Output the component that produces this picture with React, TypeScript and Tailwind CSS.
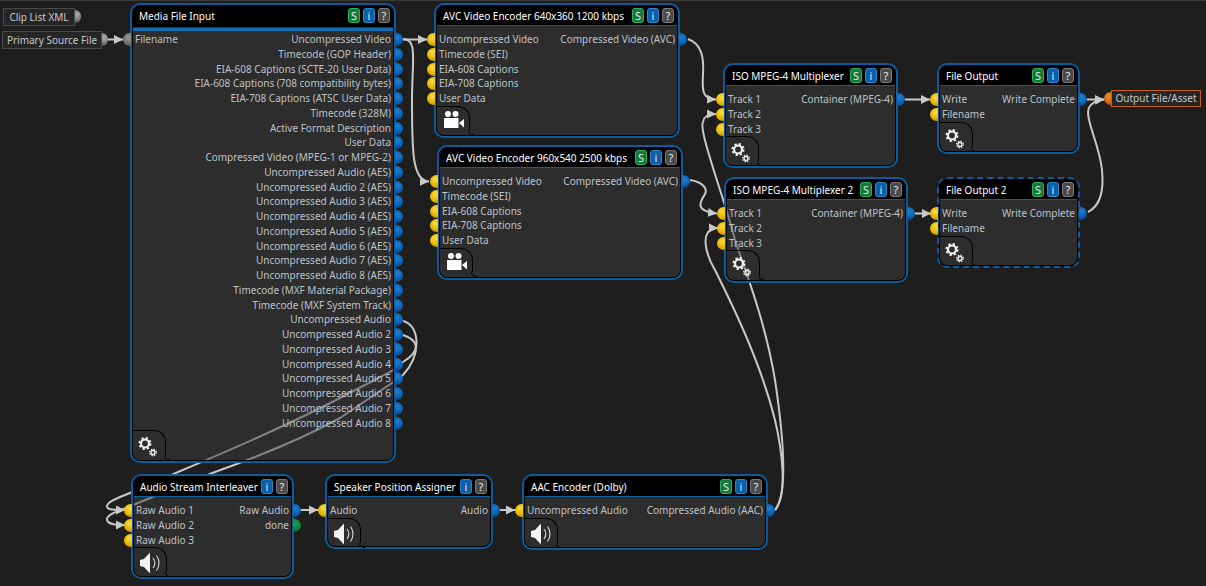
import type { ReactNode } from "react"

type PortKind = "in" | "out" | "done"

const portStyles: Record<string, string> = {
  in: "-left-[12px] rounded-l-full bg-[radial-gradient(circle_at_70%_35%,#ffdc3c,#e2b300_60%,#9a7400)]",
  out: "-right-[12px] rounded-r-full bg-[radial-gradient(circle_at_30%_35%,#1f7fd0,#0a5cab_60%,#07386b)]",
  done: "-right-[12px] rounded-r-full bg-[radial-gradient(circle_at_30%_35%,#1a9e4c,#0c7d38_60%,#064a20)]",
  grayIn: "-left-[12px] rounded-l-full bg-[radial-gradient(circle_at_70%_35%,#999999,#666666_70%,#3c3c3c)]",
}

function Port({ kind }: { kind: string }) {
  return <span className={`absolute top-px w-[8px] h-[13px] ${portStyles[kind]}`} />
}

function Row({ label, kind, right }: { label: string; kind: PortKind | "grayIn"; right?: boolean }) {
  return (
    <div className={`relative h-[14.75px] leading-[14.75px] whitespace-nowrap ${right ? "text-right" : "text-left"}`}>
      {label}
      <Port kind={kind} />
    </div>
  )
}

function Badge({ children, className }: { children: ReactNode; className: string }) {
  return (
    <span className={`w-[12px] h-[15px] rounded-[3px] border flex items-center justify-center text-[11px] leading-none text-[#e8e8e8] ${className}`}>
      {children}
    </span>
  )
}

function Gears() {
  return (
    <svg width="24" height="24" viewBox="0 0 24 24" fill="none" stroke="#f4f4f4">
      <circle cx="8" cy="9.5" r="4" strokeWidth="2.2" />
      <circle cx="8" cy="9.5" r="5.6" strokeWidth="1.8" strokeDasharray="2.2 2.2" />
      <circle cx="16" cy="18.5" r="2" strokeWidth="1.3" />
      <circle cx="16" cy="18.5" r="3.3" strokeWidth="1.3" strokeDasharray="1.4 1.2" />
    </svg>
  )
}

function Camera() {
  return (
    <svg width="22" height="20" viewBox="0 0 22 20" fill="#ffffff">
      <circle cx="6" cy="4" r="3" />
      <circle cx="13.5" cy="4" r="3" />
      <rect x="2" y="8" width="14.5" height="10" rx="0.5" />
      <polygon points="17,13 22,9 22,17.5" />
    </svg>
  )
}

function Speaker() {
  return (
    <svg width="24" height="24" viewBox="-1 0 24 24" fill="none">
      <polygon points="1,9 5,8 11,1.5 11,22.5 5,16 1,15" fill="#f4f4f4" />
      <path d="M14 7 C16.2 10 16.2 14 14 17" stroke="#cfcfcf" strokeWidth="1.2" />
      <path d="M17.5 4.5 C20.8 9 20.8 15 17.5 19.5" stroke="#cfcfcf" strokeWidth="1.2" />
    </svg>
  )
}

type NodeProps = {
  title: string
  box: string
  inputs: string[]
  outputs: string[]
  icon: ReactNode
  badges?: string
  strip?: boolean
  dashed?: boolean
  doneLast?: boolean
}

function FlowNode({ title, box, inputs, outputs, icon, badges = "Si?", strip, dashed, doneLast }: NodeProps) {
  return (
    <div className={`absolute ${box} rounded-[10px] border-2 border-[#0b5b9e] ${dashed ? "border-dashed" : ""}`}>
      <div className="h-full rounded-[8px] border border-black bg-[#3c3c3c]/50 flex flex-col">
        <div className={`bg-black rounded-t-[7px] pl-[6px] pr-[3px] flex items-center justify-between text-[10px] text-white ${strip ? "h-[21px] pb-[2px]" : "h-[19px]"}`}>
          <span className="whitespace-nowrap pt-[2px]">{title}</span>
          <div className="flex gap-[3px]">
            {badges.includes("S") && <Badge className="bg-[#14793a] border-[#2fae5e]">S</Badge>}
            <Badge className="bg-[#0b5ea8] border-[#2b86cc]">i</Badge>
            <Badge className="bg-[#4a4a4a] border-[#7a7a7a]">?</Badge>
          </div>
        </div>
        {strip ? <div className="h-[4px] bg-[#0f6fae] border-t border-[#0a3f6c]" /> : <div className="h-px bg-[#0e5f9f]" />}
        <div className={`flex-1 flex flex-col justify-between min-h-0 ${strip ? "pt-px" : "pt-[6px]"}`}>
          <div className="flex justify-between px-[2px] text-[10px] text-[#bcc2c8]">
            <div className="flex flex-col">
              {inputs.map((l) => (
                <Row key={l} label={l} kind={strip ? "grayIn" : "in"} />
              ))}
            </div>
            <div className="flex flex-col">
              {outputs.map((l, i) => (
                <Row key={l} label={l} right kind={doneLast && i === outputs.length - 1 ? "done" : "out"} />
              ))}
            </div>
          </div>
          {/* icon tab, the right edge flares out into the bottom of the node */}
          <div className="relative w-[33px] h-[25px] mb-[5px] pt-[3px] rounded-tr-[12px] border-t border-r border-black flex items-start justify-center">
            {icon}
            <span className="absolute left-full -ml-px top-full w-[6px] h-[5px] border-l border-b border-black rounded-bl-[6px]" />
          </div>
        </div>
      </div>
    </div>
  )
}

const mediaOutputs = [
  "Uncompressed Video",
  "Timecode (GOP Header)",
  "EIA-608 Captions (SCTE-20 User Data)",
  "EIA-608 Captions (708 compatibility bytes)",
  "EIA-708 Captions (ATSC User Data)",
  "Timecode (328M)",
  "Active Format Description",
  "User Data",
  "Compressed Video (MPEG-1 or MPEG-2)",
  "Uncompressed Audio (AES)",
  "Uncompressed Audio 2 (AES)",
  "Uncompressed Audio 3 (AES)",
  "Uncompressed Audio 4 (AES)",
  "Uncompressed Audio 5 (AES)",
  "Uncompressed Audio 6 (AES)",
  "Uncompressed Audio 7 (AES)",
  "Uncompressed Audio 8 (AES)",
  "Timecode (MXF Material Package)",
  "Timecode (MXF System Track)",
  "Uncompressed Audio",
  "Uncompressed Audio 2",
  "Uncompressed Audio 3",
  "Uncompressed Audio 4",
  "Uncompressed Audio 5",
  "Uncompressed Audio 6",
  "Uncompressed Audio 7",
  "Uncompressed Audio 8",
]

const encoderInputs = ["Uncompressed Video", "Timecode (SEI)", "EIA-608 Captions", "EIA-708 Captions", "User Data"]
const tracks = ["Track 1", "Track 2", "Track 3"]

// wires sit under the nodes, the see-through node bodies dim them
const wires = [
  "M108 39.5 L123 39.5",
  "M403 39.5 L427 39.5",
  "M403 39 C418 39 412 60 412 100 C412 150 412 181 429 181.5",
  "M688 39 C702 44 704 58 703 74 C702 90 702 99 716 99.5",
  "M690 180 C702 182 708 188 705 194 C700 202 694 211 717 213.5",
  "M905 99.5 L930 99.5",
  "M914 213.5 L931 213.5",
  "M1087 99.5 L1104 99.5",
  "M1088 212 C1100 206 1104 190 1102 170 C1099 140 1080 112 1092 104 C1095 101 1098 100 1104 99.5",
  "M775 510 C788 495 782 450 775 420 C760 360 730 300 715 270 C706 255 698 228 718 228",
  "M775 510 C788 495 784 440 775 380 C765 320 745 270 735 240 C725 200 698 130 703 122 C704 116 708 114 716 114",
  "M403 321 C420 325 422 355 403 375 C398 379 395 381 392 383 L340 418 C300 440 260 456 215 472 C190 482 160 494 133 505 C122 510 106 514 107 520 C108 524 114 525 125 525",
  "M403 335 C418 340 422 350 403 362 C398 366 395 369 392 371 L340 398 C290 424 240 446 178 472 C160 480 145 487 130 493 C118 498 106 502 107 507 C108 510 114 510 125 510",
  "M500 510 L515 510",
  "M301 510 L318 510",
]

export default function App() {
  return (
    <div className="relative w-[1206px] h-[586px] overflow-hidden bg-[#1e1e1e] shadow-[inset_0_1px_0_#3a3a3a] font-['Noto_Sans',sans-serif]">
      <svg className="absolute inset-0" width="1206" height="586" fill="none">
        <defs>
          <marker id="arrow" markerUnits="userSpaceOnUse" markerWidth="10" markerHeight="10" refX="9" refY="5" orient="auto">
            <polygon points="0,0.5 9,5 0,9.5" fill="#c8c8c8" />
          </marker>
        </defs>
        {wires.map((d) => (
          <path key={d} d={d} stroke="#c8c8c8" strokeWidth="2" markerEnd="url(#arrow)" />
        ))}
      </svg>

      <div className="absolute left-[3px] top-[8px] w-[72px] h-[18px] bg-[#262626] border border-[#4a4a4a] text-[10px] leading-[16px] text-[#c4c8cc] text-center whitespace-nowrap">
        Clip List XML
        <span className="absolute -right-[7px] top-[1px] w-[6px] h-[13px] rounded-r-full bg-[radial-gradient(circle_at_30%_35%,#b0b0b0,#6c6c6c_70%,#3c3c3c)]" />
      </div>
      <div className="absolute left-[2px] top-[31px] w-[100px] h-[18px] bg-[#262626] border border-[#4a4a4a] text-[10px] leading-[16px] text-[#c4c8cc] text-center whitespace-nowrap">
        Primary Source File
        <span className="absolute -right-[7px] top-[1px] w-[6px] h-[13px] rounded-r-full bg-[radial-gradient(circle_at_30%_35%,#b0b0b0,#6c6c6c_70%,#3c3c3c)]" />
      </div>

      <FlowNode title="Media File Input" box="left-[130px] top-[3px] w-[266px] h-[460px]" inputs={["Filename"]} outputs={mediaOutputs} icon={<Gears />} strip />
      <FlowNode title="AVC Video Encoder 640x360 1200 kbps" box="left-[434px] top-[3px] w-[246px] h-[135px]" inputs={encoderInputs} outputs={["Compressed Video (AVC)"]} icon={<Camera />} />
      <FlowNode title="AVC Video Encoder 960x540 2500 kbps" box="left-[437px] top-[145px] w-[246px] h-[135px]" inputs={encoderInputs} outputs={["Compressed Video (AVC)"]} icon={<Camera />} />
      <FlowNode title="ISO MPEG-4 Multiplexer" box="left-[723px] top-[63px] w-[175px] h-[105px]" inputs={tracks} outputs={["Container (MPEG-4)"]} icon={<Gears />} />
      <FlowNode title="ISO MPEG-4 Multiplexer 2" box="left-[724px] top-[177px] w-[184px] h-[106px]" inputs={tracks} outputs={["Container (MPEG-4)"]} icon={<Gears />} />
      <FlowNode title="File Output" box="left-[937px] top-[63px] w-[143px] h-[91px]" inputs={["Write", "Filename"]} outputs={["Write Complete"]} icon={<Gears />} />
      <FlowNode title="File Output 2" box="left-[937px] top-[177px] w-[143px] h-[91px]" inputs={["Write", "Filename"]} outputs={["Write Complete"]} icon={<Gears />} dashed />
      <FlowNode title="Audio Stream Interleaver" box="left-[131px] top-[474px] w-[163px] h-[105px]" inputs={["Raw Audio 1", "Raw Audio 2", "Raw Audio 3"]} outputs={["Raw Audio", "done"]} icon={<Speaker />} badges="i?" doneLast />
      <FlowNode title="Speaker Position Assigner" box="left-[325px] top-[474px] w-[168px] h-[75px]" inputs={["Audio"]} outputs={["Audio"]} icon={<Speaker />} badges="i?" />
      <FlowNode title="AAC Encoder (Dolby)" box="left-[522px] top-[474px] w-[246px] h-[76px]" inputs={["Uncompressed Audio"]} outputs={["Compressed Audio (AAC)"]} icon={<Speaker />} />

      <div className="absolute left-[1111px] top-[90px] w-[90px] h-[17px] bg-[#262626] border border-[#c0621c] text-[10px] leading-[15px] text-[#c4c8cc] text-center whitespace-nowrap">
        Output File/Asset
        <span className="absolute -left-[8px] top-[1px] w-[7px] h-[13px] rounded-l-full bg-[radial-gradient(circle_at_70%_35%,#f08a30,#d86a10_60%,#8a4208)]" />
      </div>
    </div>
  )
}
